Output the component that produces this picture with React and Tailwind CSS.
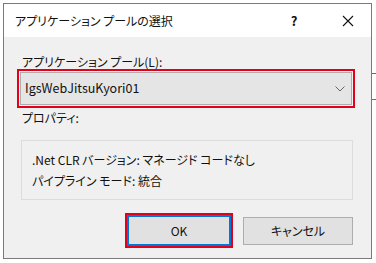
export default function App() {
  const font = { fontFamily: '"Noto Sans CJK JP", "Noto Sans", sans-serif', fontFeatureSettings: '"palt"' }
  return (
    <div className="relative h-[263px] w-[376px] overflow-hidden bg-white text-[12px] text-[#111]" style={font}>
      {/* bits of the window behind */}
      <div className="absolute left-[372px] top-[73px] h-[1px] w-[4px] bg-[#2a7ad5]" />
      <div className="absolute left-[372px] top-[99px] h-[1px] w-[4px] bg-[#2a7ad5]" />

      <div className="ml-[3px] mt-[3px] flex h-[256px] w-[369px] flex-col border border-[#7a7a7a] bg-[#f0f0f0]">
        <div className="flex h-[33px] shrink-0 items-center bg-white pl-[11px]">
          <span className="flex-1 leading-none">アプリケーション プールの選択</span>
          <span className="w-[20px] text-center text-[13px] font-semibold">?</span>
          <svg className="ml-[38px] mr-[17px]" width="12" height="12" viewBox="0 0 12 12">
            <path d="M1 1 L11 11 M11 1 L1 11" stroke="#111" strokeWidth="1.1" fill="none" />
          </svg>
        </div>

        <div className="flex flex-col">
          <div className="ml-[18px] mt-[17px] leading-[15px]">アプリケーション プール(L):</div>
          <div className="ml-[13px] w-[338px] border-2 border-[#e3001b] p-[1px]">
            <div className="flex h-[33px] items-center border border-[#adadad] bg-[#e5e5e5] pl-[4px] pr-[6px]">
              <span className="flex-1 text-[12.5px]">IgsWebJitsuKyori01</span>
              <svg width="10" height="6" viewBox="0 0 10 6">
                <path d="M0.5 0.5 L5 5 L9.5 0.5" stroke="#666" strokeWidth="1" fill="none" />
              </svg>
            </div>
          </div>
          <div className="ml-[18px] mt-[2px] leading-[15px]">プロパティ:</div>
          <div className="ml-[17px] mt-[15px] flex h-[60px] w-[332px] flex-col justify-center gap-[5px] border border-[#dcdcdc] px-[10px] leading-[16px]">
            <div>.Net CLR バージョン: マネージド コードなし</div>
            <div>パイプライン モード: 統合</div>
          </div>
          <div className="ml-[121px] mt-[13px] flex items-center gap-[10px]">
            <div className="border-2 border-[#e3001b]">
              <div className="flex h-[31px] w-[104px] items-center justify-center border-2 border-[#0078d7] bg-[#e1e1e1]">
                OK
              </div>
            </div>
            <div className="flex h-[28px] w-[110px] items-center justify-center border border-[#adadad] bg-[#e1e1e1]">
              キャンセル
            </div>
          </div>
        </div>
      </div>
    </div>
  )
}
